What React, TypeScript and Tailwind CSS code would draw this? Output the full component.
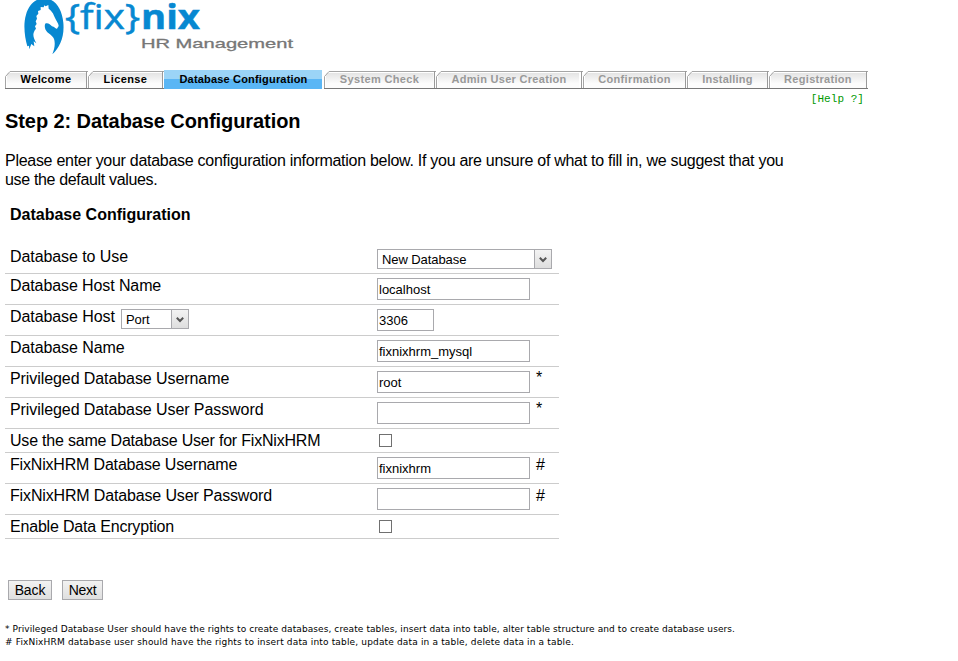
import type { ReactNode } from "react";

const tabs = [
  { label: "Welcome", box: "w-[83px]", text: "text-black", ls: "tracking-[0.4px]" },
  { label: "License", box: "w-[76px]", text: "text-black", ls: "tracking-[0.4px]" },
  { label: "Database Configuration", box: "w-[160px]", text: "text-black", ls: "tracking-[0.18px]", active: true },
  { label: "System Check", box: "w-[112px]", text: "text-[#999]", ls: "tracking-[0.35px]" },
  { label: "Admin User Creation", box: "w-[147px]", text: "text-[#999]", ls: "tracking-[0.3px]" },
  { label: "Confirmation", box: "w-[104px]", text: "text-[#999]", ls: "tracking-[0.35px]" },
  { label: "Installing", box: "w-[82px]", text: "text-[#999]", ls: "tracking-[0.2px]" },
  { label: "Registration", box: "w-[99px]", text: "text-[#999]", ls: "tracking-[0.3px]" },
];

function Logo() {
  return (
    <svg width="310" height="60" viewBox="0 0 310 60" className="block">
      <g transform="translate(20 0) scale(0.33333)">
        <path
          fill="#0788d1"
          d="M28 148 L27 137 L22 139 C14 112 9 72 18 44 C27 12 48 -5 72 -5 C106 -5 126 27 130 68 C134 112 119 143 97 163 C103 148 106 134 103 120 C99 104 82 102 76 88 C74 81 73 75 77 70 C85 68 91 73 96 79 C104 79 106 88 111 86 L116 78 C116 69 107 60 102 47 C99 37 92 31 86 26 L85 15 L77 19 L73 16 L71 22 L62 21 L62 30 L54 33 L55 41 L49 48 L51 56 L47 64 L50 72 L45 79 L48 86 C35 101 40 113 49 130 L41 124 L43 139 L34 132 Z"
        />
      </g>
      <g fontFamily="'Open Sans', sans-serif" fill="#0788d1" stroke="#0788d1" strokeWidth="0.5">
        <text x="65" y="29" fontSize="34" textLength="75" lengthAdjust="spacingAndGlyphs">{"{fix}"}</text>
        <text x="141" y="29" fontSize="34" fontWeight="700" textLength="59" lengthAdjust="spacingAndGlyphs">nix</text>
      </g>
      <text x="141" y="48" fontFamily="'Liberation Sans', sans-serif" fontSize="13.5" fill="#777" stroke="#777" strokeWidth="0.3" textLength="152" lengthAdjust="spacingAndGlyphs">
        HR Management
      </text>
    </svg>
  );
}

function Tab({ label, box, text, ls, active }: (typeof tabs)[number]) {
  const base = "shrink-0 text-center text-[11px] font-bold";
  if (active) {
    return (
      <div className={`${base} ${box} ${text} ${ls} h-[19px] border-r-2 border-white bg-[linear-gradient(#9bd4f7_0_9px,#5ab6f5_9px)] pl-px leading-[19px]`}>
        {label}
      </div>
    );
  }
  return (
    <div className={`${base} ${box} ${text} ${ls} relative mt-px h-[18px]`}>
      <svg className="absolute inset-0 h-full w-full" aria-hidden="true">
        <defs>
          <linearGradient id="tabfill" x1="0" x2="0" y1="0" y2="1">
            <stop offset="0" stopColor="#e4e4e4" />
            <stop offset="0.7" stopColor="#fcfcfc" />
          </linearGradient>
        </defs>
        <rect x="2" y="2" width="96%" height="15" fill="url(#tabfill)" />
        <path d="M0 0H5L0 5Z" fill="#fff" />
        <path d="M0.5 18V5.5L5 0.5H400" fill="none" stroke="#a5a5a5" />
        <rect y="17" width="100%" height="1" fill="#777" />
      </svg>
      <div className="relative mr-px h-[17px] border-r border-[#999] pl-px leading-4">{label}</div>
    </div>
  );
}

function Arrow() {
  return (
    <span className="flex h-full w-[17px] items-center justify-center border-l border-[#a9a9ad] bg-[linear-gradient(#f3f3f3,#dedede)] pt-px">
      <svg width="8" height="6" viewBox="0 0 8 6">
        <path d="M0.8 0.8L4 4L7.2 0.8" fill="none" stroke="#555" strokeWidth="2" />
      </svg>
    </span>
  );
}

function Select({ value, size }: { value: string; size: string }) {
  return (
    <span className={`${size} flex h-5 items-center justify-between border border-[#a9a9ad] bg-white text-[13px]`}>
      <span className="pl-1 pt-px tracking-[-0.08px]">{value}</span>
      <Arrow />
    </span>
  );
}

function Field({ value = "", size = "w-[153px]" }: { value?: string; size?: string }) {
  return (
    <div className={`${size} mt-1 h-[22px] border border-[#a9a9ad] bg-white pl-px text-[13px] leading-[21px]`}>{value}</div>
  );
}

function Check() {
  return <div className="ml-[2px] mt-[5px] h-[13px] w-[13px] border border-[#707070] bg-white" />;
}

function Row({
  label,
  height = "h-[31px]",
  ls = "tracking-[-0.08px]",
  children,
  mark,
}: {
  label: ReactNode;
  height?: string;
  ls?: string;
  children: ReactNode;
  mark?: string;
}) {
  return (
    <div className={`${height} flex border-b border-[#ccc] pl-[5px]`}>
      <div className={`${ls} flex w-[367px] pt-[3px] leading-[18px]`}>{label}</div>
      {children}
      {mark && <span className={`ml-[6px] leading-[18px] ${mark === "*" ? "pt-[2px]" : "pt-[3px]"}`}>{mark}</span>}
    </div>
  );
}

export default function App() {
  return (
    <div className="h-[661px] w-[958px] overflow-hidden bg-white font-['Liberation_Sans',Arial,sans-serif] text-[16px] leading-[18px] text-black">
      <Logo />
      <div className="flex pl-[5px] pt-[10px]">
        {tabs.map((t) => (
          <Tab key={t.label} {...t} />
        ))}
      </div>
      <div className="w-[864px] pt-[3px] text-right font-['Liberation_Mono',monospace] text-[11px] leading-[14px] tracking-[0.05px] text-[#090]">[Help ?]</div>
      <div className="pl-[5px]">
        <h2 className="pt-[3px] text-[20px] font-bold leading-6 tracking-[-0.08px]">Step 2: Database Configuration</h2>
        <p className="pt-[18px] leading-[19px] tracking-[-0.28px]">
          Please enter your database configuration information below. If you are unsure of what to fill in, we suggest that you
          <br />
          <span className="tracking-[-0.34px]">use the default values.</span>
        </p>
        <h3 className="pl-[5px] pt-[16px] font-bold leading-5">Database Configuration</h3>
        <div className="mt-5 w-[554px]">
          <Row label="Database to Use" height="h-[29px]">
            <div className="pt-1">
              <Select value="New Database" size="w-[175px]" />
            </div>
          </Row>
          <Row label="Database Host Name" ls="tracking-[-0.1px]">
            <Field value="localhost" />
          </Row>
          <Row
            label={
              <>
                <span className="w-[111px]">Database Host</span>
                <div className="pt-px">
                  <Select value="Port" size="w-[68px]" />
                </div>
              </>
            }
          >
            <Field value="3306" size="w-[57px]" />
          </Row>
          <Row label="Database Name">
            <Field value="fixnixhrm_mysql" />
          </Row>
          <Row label="Privileged Database Username" mark="*">
            <Field value="root" />
          </Row>
          <Row label="Privileged Database User Password" mark="*">
            <Field />
          </Row>
          <Row label="Use the same Database User for FixNixHRM" height="h-[24px]" ls="tracking-[-0.2px]">
            <Check />
          </Row>
          <Row label="FixNixHRM Database Username" mark="#" ls="tracking-[-0.18px]">
            <Field value="fixnixhrm" />
          </Row>
          <Row label="FixNixHRM Database User Password" mark="#" ls="tracking-[-0.15px]">
            <Field />
          </Row>
          <Row label="Enable Data Encryption" height="h-[24px]" ls="tracking-[-0.19px]">
            <Check />
          </Row>
        </div>
        <div className="flex gap-[10px] pl-[3px] pt-[41px] text-[14px]">
          <button className="h-5 w-[44px] border border-[#a9a9ad] bg-[linear-gradient(#f2f2f2,#dfdfdf)] leading-[18px] tracking-[-0.1px]">Back</button>
          <button className="h-5 w-[41px] border border-[#a9a9ad] bg-[linear-gradient(#f2f2f2,#dfdfdf)] leading-[18px] tracking-[-0.3px]">Next</button>
        </div>
        <div className="whitespace-nowrap pt-[23px] font-['DejaVu_Sans',sans-serif] text-[9px] leading-[13px]">
          <div className="tracking-[0.088px]">* Privileged Database User should have the rights to create databases, create tables, insert data into table, alter table structure and to create database users.</div>
          <div className="tracking-[0.16px]"># FixNixHRM database user should have the rights to insert data into table, update data in a table, delete data in a table.</div>
        </div>
      </div>
    </div>
  );
}
